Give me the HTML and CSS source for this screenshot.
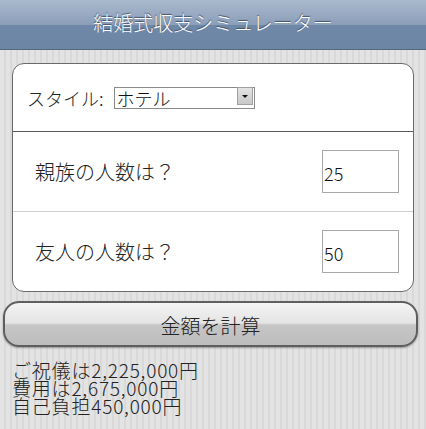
FILE: index.html
```html
<!DOCTYPE HTML><html>
<head>
	<meta name="viewport" charset="UTF-8" content="width=device-width, initial-scale=1">
	<title>結婚式収支シミュレーター</title>
	<link rel="stylesheet" href="styles.css">
</head>
<body>
	<div class="header">
		<h1>結婚式収支シミュレーター</h1>
	</div>
	<div class="card">
		<div class="row row-style">
			<label for="style">スタイル:</label>
			<span class="select">
				<select id="style" name="style">
					<option>ホテル</option>
					<option>レストラン</option>
					<option>式場</option>
				</select>
				<span class="arrow"></span>
			</span>
		</div>
		<div class="row row-num">
			<label for="family">親族の人数は？</label>
			<input type="text" id="family" class="num" value="25">
		</div>
		<div class="row row-num last">
			<label for="friend">友人の人数は？</label>
			<input type="text" id="friend" class="num" value="50">
		</div>
	</div>
	<button class="calc" type="button">金額を計算</button>
	<div class="result">
		<p>ご祝儀は2,225,000円</p>
		<p>費用は2,675,000円</p>
		<p>自己負担450,000円</p>
	</div>
</body>
</html>
```

FILE: styles.css
```css
html {
	font-family: "Noto Sans CJK JP", sans-serif;
	font-weight: 300;}
body {
	margin: 0;
	padding-bottom: 10px;
	color: #222;
	background-color: #dedede;
	background-image: repeating-linear-gradient(90deg, #e3e3e3 0px, #e3e3e3 4px, #d9d9d9 4px, #d9d9d9 6px);
}
.header {
	height: 49px;
	background: linear-gradient(#a9b9cd, #8c9fb9 50%, #7088a7 51%, #6e86a5);
	border-bottom: 1px solid #56667d;
	text-align: center;
}
.header h1 {
	margin: 0;
	line-height: 46px;
	font-size: 20px;
	font-weight: 300;
	color: #fff;
	text-shadow: 0 -1px 1px #3d4d63;
}
.card {
	margin: 13px 12px 0 12px;
	background: #fff;
	border: 1px solid #6a6a6a;
	border-radius: 12px;
}
.row {
	display: flex;
	align-items: center;
}
.row-style {
	height: 67px;
	padding-left: 14px;
	border-bottom: 1px solid #5a5a5a;
	font-size: 18px;
}
.row-style label {
	margin-right: 10px;
}
.row-num {
	height: 79px;
	padding: 0 14px 0 22px;
	justify-content: space-between;
	border-bottom: 1px solid #cfcfcf;
	font-size: 20px;
}
.row-num.last {
	border-bottom: none;
}
.select {
	position: relative;
	display: inline-block;
}
.select select {
	appearance: none;
	-webkit-appearance: none;
	width: 141px;
	height: 22px;
	margin: 0;
	padding: 0 0 0 2px;
	border: 1px solid #8a8a8a;
	border-radius: 0;
	background: #fff;
	font-family: inherit;
	font-weight: 300;
	font-size: 18px;
	line-height: 20px;
	color: #111;
}
.select .arrow {
	position: absolute;
	top: 2px;
	right: 2px;
	width: 14px;
	height: 16px;
	border: 1px solid #a0a0a0;
	background: linear-gradient(#e4e4e4, #c8c8c8);
	pointer-events: none;
}
.select .arrow::after {
	content: "";
	position: absolute;
	left: 4px;
	top: 7px;
	border-left: 3px solid transparent;
	border-right: 3px solid transparent;
	border-top: 3px solid #111;
}
.num {
	width: 77px;
	height: 43px;
	margin: 0;
	padding: 3px 0 0 1px;
	box-sizing: border-box;
	border: 1px solid #a8a8a8;
	font-family: inherit;
	font-weight: 300;
	font-size: 18px;
	color: #111;
}
.calc {
	display: block;
	width: 415px;
	height: 46px;
	margin: 9px 8px 0 3px;
	padding: 3px 0 0 0;
	border: 2px solid #5e5e5e;
	border-radius: 16px;
	background: linear-gradient(#f4f4f4, #e4e4e4 48%, #c6c6c6 52%, #bdbdbd);
	box-shadow: 0 1px 2px rgba(0, 0, 0, 0.35);
	font-family: inherit;
	font-weight: 300;
	font-size: 20px;
	color: #222;
}
.result {
	margin-top: 14px;
	padding-left: 12px;
	font-size: 19px;
	line-height: 18px;
	letter-spacing: 0.8px;
}
.result p {
	margin: 0;
}
```
